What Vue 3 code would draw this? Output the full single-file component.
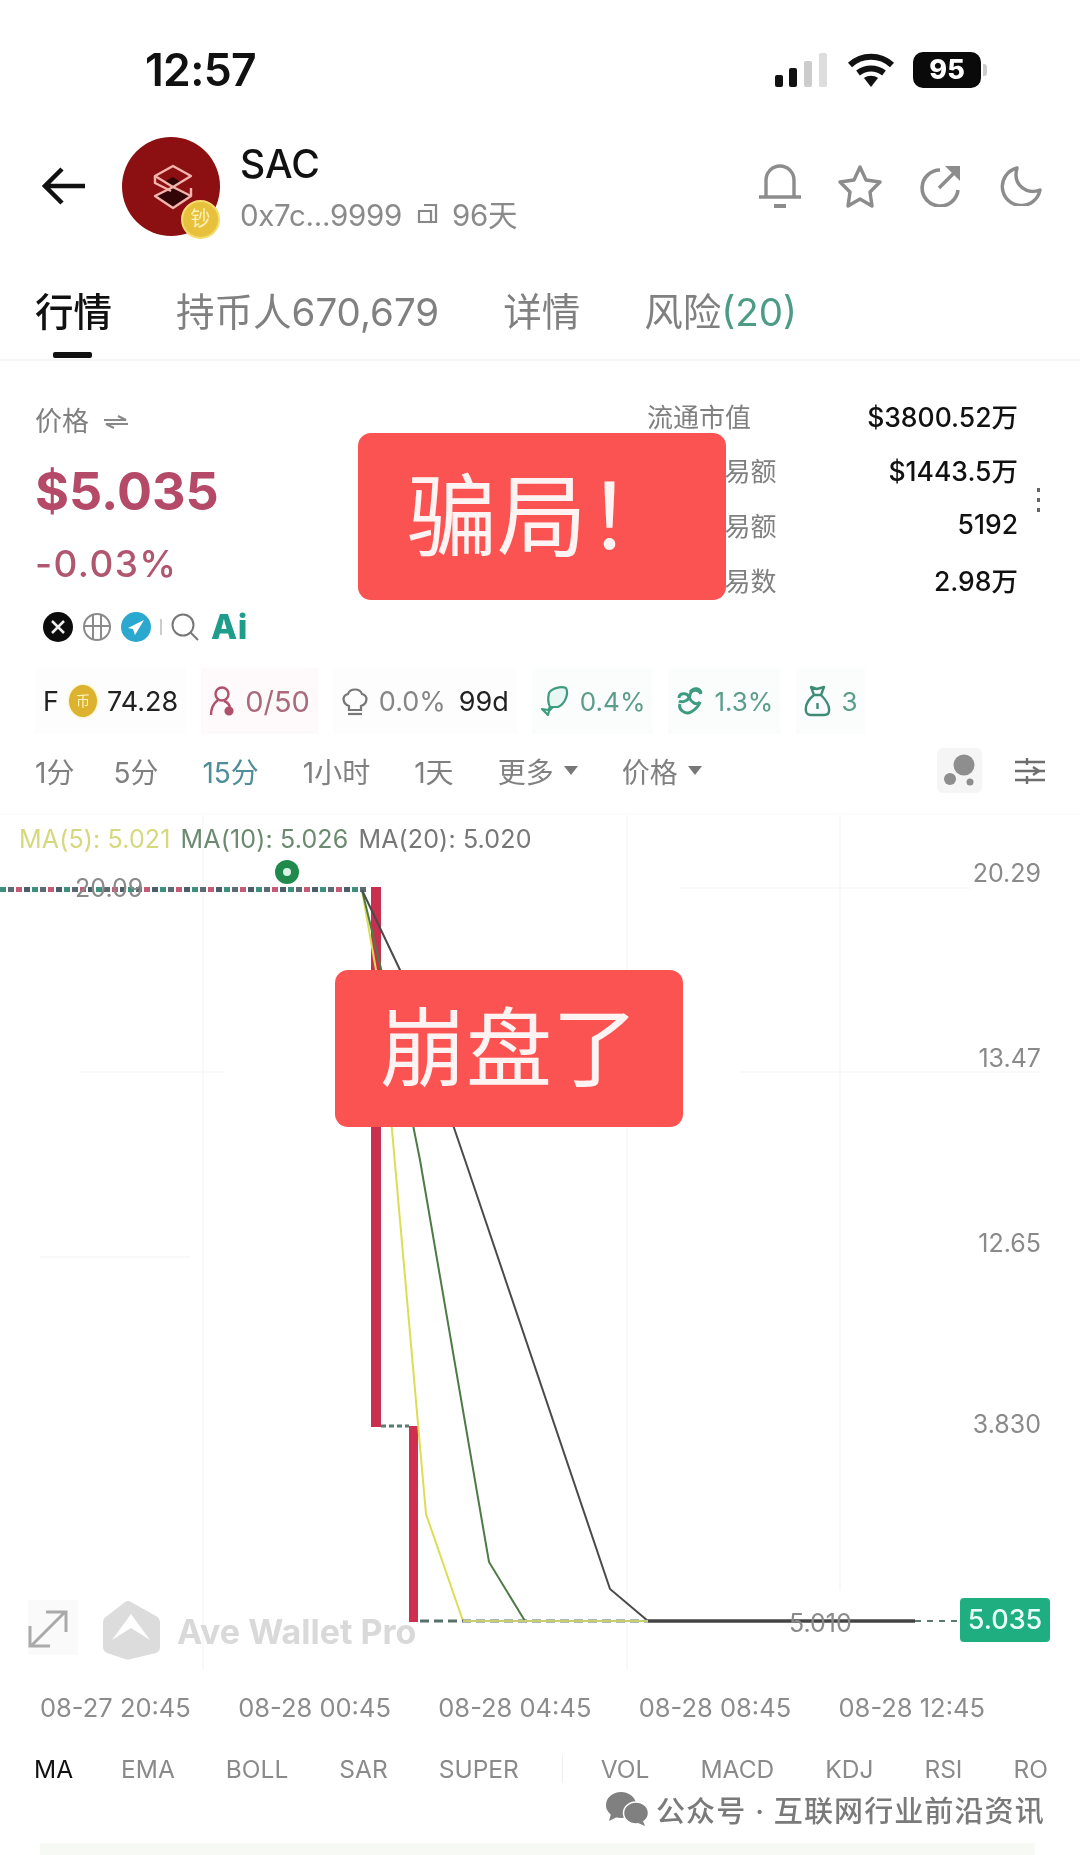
<script setup>
const tabs = [
  { label: '行情', active: true },
  { label: '持币人670,679' },
  { label: '详情' },
]

const stats = [
  { label: '流通市值', value: '$3800.52万' },
  { label: '24H交易额', value: '$1443.5万' },
  { label: '24H交易额', value: '5192' },
  { label: '24H交易数', value: '2.98万' },
]

const frames = ['1分', '5分', '15分', '1小时', '1天']
const indicators = ['MA', 'EMA', 'BOLL', 'SAR', 'SUPER']
const subIndicators = ['VOL', 'MACD', 'KDJ', 'RSI', 'RO']
const times = ['08-27 20:45', '08-28 00:45', '08-28 04:45', '08-28 08:45', '08-28 12:45']

const axis = [
  { text: '20.29', y: 882 },
  { text: '13.47', y: 1067 },
  { text: '12.65', y: 1252 },
  { text: '3.830', y: 1433 },
]

// small flat candles before the drop
const colors = ['#3f8f7d', '#5d6a73', '#c25a78', '#4b5f68']
const candles = []
for (let x = 0, i = 0; x < 362; x += 8, i++) {
  candles.push({ x, color: colors[i % 4] })
}
</script>

<template>
  <div class="page">
    <div class="status">
      <span class="time">12:57</span>
      <div class="status-icons">
        <svg width="54" height="34" viewBox="0 0 54 34">
          <rect x="0" y="22" width="8" height="12" rx="2" fill="#111" />
          <rect x="14" y="15" width="8" height="19" rx="2" fill="#111" />
          <rect x="29" y="8" width="8" height="26" rx="2" fill="#ccc" />
          <rect x="44" y="0" width="8" height="34" rx="2" fill="#ddd" />
        </svg>
        <svg width="48" height="34" viewBox="0 0 48 34">
          <path d="M3 12C15 1 33 1 45 12" fill="none" stroke="#111" stroke-width="6" />
          <path d="M11 20c8-6 18-6 26 0" fill="none" stroke="#111" stroke-width="6" />
          <path d="M17 25c4-3 10-3 14 0l-7 9z" fill="#111" />
        </svg>
        <div class="battery">95</div>
        <div class="battery-tip"></div>
      </div>
    </div>

    <div class="header">
      <svg class="back" width="44" height="38" viewBox="0 0 44 38">
        <path d="M43 19H3M20 2L3 19l17 17" fill="none" stroke="#111" stroke-width="4.5" />
      </svg>
      <div class="avatar">
        <svg class="avatar-logo" width="42" height="46" viewBox="0 0 42 46">
          <path d="M21 22l18 10-18 12L3 32z" fill="#320606" />
          <path d="M12 18l9-5 9 6-9 5z" fill="#320606" />
          <g fill="none" stroke="#f2b4ad" stroke-width="2.4" stroke-linejoin="round">
            <path d="M21 2l18 10-18 11L3 12z" />
            <path d="M21 23l18 9-18 12L3 32z" />
            <path d="M3 12v7l16 8M39 24v8" />
          </g>
        </svg>
        <div class="avatar-badge">钞</div>
      </div>
      <div class="token">
        <div class="token-name">SAC</div>
        <div class="token-sub">
          <span>0x7c...9999</span>
          <svg width="22" height="24" viewBox="0 0 22 24" fill="none" stroke="#888" stroke-width="2.2">
            <path d="M8 2h12v17H3V8h12v11" />
          </svg>
          <span>96天</span>
        </div>
      </div>
      <div class="actions">
        <svg width="42" height="46" viewBox="0 0 42 46" fill="none" stroke="#8c8c8c" stroke-width="3.4">
          <path d="M7 33V17a14 14 0 0 1 28 0v16" />
          <path d="M0 34h42" />
          <path d="M15 43h12" stroke-width="4" />
        </svg>
        <svg width="44" height="44" viewBox="0 0 44 44" fill="none" stroke="#8c8c8c" stroke-width="3.4" stroke-linejoin="round">
          <path d="M22 3l6 13 14 2-10 10 2 14-12-7-12 7 2-14L2 18l14-2z" />
        </svg>
        <svg width="44" height="42" viewBox="0 0 44 42" fill="none" stroke="#8c8c8c" stroke-width="3.6">
          <path d="M21 5A18 18 0 1 0 39 25" />
          <path d="M20 23L36 7" />
          <path d="M26 1h15v15z" fill="#8c8c8c" stroke="none" />
        </svg>
        <svg width="42" height="40" viewBox="0 0 42 40" fill="none" stroke="#8c8c8c" stroke-width="3.4" stroke-linejoin="round">
          <path d="M17 2A19 19 0 1 0 40 24C28 29 12 20 17 2z" />
        </svg>
      </div>
    </div>

    <div class="tabs">
      <div v-for="t in tabs" :key="t.label" class="tab" :class="{ active: t.active }">{{ t.label }}</div>
      <div class="tab">风险<span class="risk">(20)</span></div>
    </div>

    <div class="price-section">
      <div class="price-left">
        <div class="price-label">
          价格
          <svg width="26" height="14" viewBox="0 0 26 14" fill="none" stroke="#888" stroke-width="2">
            <path d="M1 5h22L15 1M25 9H3l8 4" />
          </svg>
        </div>
        <div class="price">$5.035</div>
        <div class="change">-0.03%</div>
        <div class="socials">
          <div class="x-icon">
            <svg width="16" height="16" viewBox="0 0 16 16" stroke="#eee" stroke-width="2.5"><path d="M2 2l12 12M14 2L2 14" /></svg>
          </div>
          <svg width="30" height="30" viewBox="0 0 30 30" fill="none" stroke="#8a8a8a" stroke-width="2">
            <circle cx="15" cy="15" r="13" />
            <path d="M2 14h26M11 2.5v25M19 2.5v25" />
          </svg>
          <div class="tg-icon">
            <svg width="18" height="18" viewBox="0 0 18 18" fill="#fff"><path d="M17 2L1 10l5 1 2 6 3-5z" /></svg>
          </div>
          <div class="divider"></div>
          <svg width="28" height="28" viewBox="0 0 28 28" fill="none" stroke="#777" stroke-width="2">
            <circle cx="12" cy="12" r="10.5" />
            <path d="M19 19l8 8" />
          </svg>
          <span class="ai">Ai</span>
        </div>
      </div>
      <div class="stats">
        <div v-for="(s, i) in stats" :key="i" class="stat">
          <span class="stat-label">{{ s.label }}</span>
          <span class="stat-value">{{ s.value }}</span>
        </div>
      </div>
      <div class="more-dots"><i></i><i></i><i></i></div>
      <div class="sticker sticker-scam">骗局！</div>
    </div>

    <div class="chips">
      <div class="chip">
        <span class="dark">F</span>
        <div class="coin">币</div>
        <span class="dark">74.28</span>
      </div>
      <div class="chip chip-red">
        <svg width="26" height="30" viewBox="0 0 26 30" fill="none" stroke="#b0506a" stroke-width="2.4">
          <circle cx="13" cy="8" r="6.5" />
          <path d="M9 14c-4 3-7 8-7 15M15 15c3 1 5 3 6 6" />
          <circle cx="20" cy="25" r="3.4" fill="#b0506a" />
        </svg>
        <span class="red">0/50</span>
      </div>
      <div class="chip">
        <svg width="28" height="30" viewBox="0 0 28 30" fill="none" stroke="#777" stroke-width="2.2">
          <path d="M8 20C2 18 0 10 7 8c2-6 12-6 14 0 7 2 5 10-1 12v4H8z" />
          <path d="M7 28h14" />
        </svg>
        <span class="gray">0.0%</span>
        <span class="dark days">99d</span>
      </div>
      <div class="chip chip-green">
        <svg width="30" height="32" viewBox="0 0 30 32" fill="none" stroke="#3d9b80" stroke-width="2.2" stroke-linejoin="round">
          <path d="M9 8c3-5 12-7 17-5 3 6-1 16-8 19H10c-2-4-2-10-1-14z" fill="#e7f7f1" />
          <path d="M10 22l-2 3-6-1 6 6 1-4 4-4" />
        </svg>
        <span class="green">0.4%</span>
      </div>
      <div class="chip chip-green">
        <svg width="28" height="30" viewBox="0 0 28 30" fill="none" stroke="#3d9b80" stroke-width="3">
          <path d="M3 12c0-5 8-6 10-1s7 9 11 5" />
          <path d="M25 8c-2-5-10-5-11 1s-8 8-11 6" />
          <path d="M4 18c-2 6 6 11 11 8s8-6 9-10" />
          <path d="M14 6c4-5 10-4 11 1" />
        </svg>
        <span class="green">1.3%</span>
      </div>
      <div class="chip chip-green">
        <svg width="27" height="32" viewBox="0 0 27 32" fill="none" stroke="#3f8c76" stroke-width="2.4" stroke-linejoin="round">
          <path d="M7 2l6 2 7-2-3 8h-7zM10 10C5 14 1 20 2 26c0 3 3 4 5 4h13c3 0 5-1 5-4 1-6-4-12-8-16" />
          <path d="M13.500 18v6" />
        </svg>
        <span class="green">3</span>
      </div>
    </div>

    <div class="frames">
      <span v-for="f in frames" :key="f" :class="{ current: f === '15分' }">{{ f }}</span>
      <span class="dropdown">更多<i class="caret"></i></span>
      <span class="dropdown">价格<i class="caret"></i></span>
      <div class="frames-right">
        <div class="shape-btn">
          <svg width="32" height="34" viewBox="0 0 32 34" fill="#8e8e8e">
            <circle cx="20" cy="11" r="10.500" />
            <circle cx="6" cy="25" r="6" />
            <circle cx="26" cy="28" r="3.500" />
          </svg>
        </div>
        <svg width="30" height="30" viewBox="0 0 30 30" fill="none" stroke="#6e6e6e" stroke-width="2.4">
          <path d="M0 6h30M0 15h30M0 24h30" />
          <path d="M12 2v7M18 11l6 4-6 4M12 20v8" />
        </svg>
      </div>
    </div>

    <div class="chart">
      <svg class="chart-canvas" width="1080" height="855" viewBox="0 815 1080 855">
        <g stroke="#f8f8f8" stroke-width="1.5">
          <path d="M203 815V1670M627 815V1670M840 815V1590" />
          <path d="M80 1072H225M740 1072H1040M680 888H970M40 1257H190" />
        </g>
        <circle cx="287" cy="872" r="12" fill="#1f8a4c" />
        <circle cx="287" cy="872" r="4" fill="#d9f2e2" />
        <rect v-for="c in candles" :key="c.x" :x="c.x" y="887" width="6" height="5" :fill="c.color" />
        <text x="75" y="897" class="chart-label">20.09</text>
        <rect x="371" y="887" width="10" height="540" fill="#c9304f" />
        <path d="M381 1426H409" stroke="#5b7a70" stroke-width="3" stroke-dasharray="5 3" />
        <rect x="409" y="1426" width="9" height="196" fill="#d0304f" />
        <path d="M362 890L376 970L392 1130L426 1514L463 1621" fill="none" stroke="#dddd55" stroke-width="2" />
        <path d="M362 890L385 985L420 1160L489 1562L525 1621" fill="none" stroke="#4e7a45" stroke-width="2" />
        <path d="M362 890L400 970L465 1160L610 1589L648 1621" fill="none" stroke="#4a4a4a" stroke-width="2" />
        <path d="M420 1621H648" stroke="#58706a" stroke-width="3" stroke-dasharray="9 5" />
        <path d="M463 1621H648" stroke="#c8cf70" stroke-width="2" />
        <path d="M648 1621H915" stroke="#444" stroke-width="3.500" />
        <path d="M915 1621H958" stroke="#5b7a70" stroke-width="2" stroke-dasharray="6 6" />
        <text x="789" y="1632" class="chart-label">5.010</text>
        <text v-for="a in axis" :key="a.text" x="1041" :y="a.y" text-anchor="end" class="axis-label">{{ a.text }}</text>
        <rect x="28" y="1600" width="50" height="55" fill="#fafafa" />
        <path d="M30 1626v20h20M66 1632v-20H46M31 1646l34-34" fill="none" stroke="#aaa" stroke-width="3" />
        <path d="M131 1602l25 14q4 2 4 7v24q0 4-4 6l-25 6q-3 1-6 0l-18-6q-4-2-4-6v-24q0-5 4-7l18-14q3-2 6 0z" fill="#dcdcdc" />
        <path d="M112 1640l19-26 19 26-19-12z" fill="#fff" />
        <text x="177" y="1644" class="watermark-logo">Ave Wallet Pro</text>
      </svg>
      <div class="ma-line">
        <span class="ma5">MA(5): 5.021</span>
        <span class="ma10">MA(10): 5.026</span>
        <span class="ma20">MA(20): 5.020</span>
      </div>
      <div class="price-tag">5.035</div>
      <div class="sticker sticker-crash">崩盘了</div>
    </div>

    <div class="times">
      <span v-for="t in times" :key="t">{{ t }}</span>
    </div>

    <div class="indicators">
      <span v-for="(n, i) in indicators" :key="n" :class="{ selected: i === 0 }">{{ n }}</span>
      <div class="indicator-sep"></div>
      <span v-for="n in subIndicators" :key="n">{{ n }}</span>
    </div>

    <div class="account">
      <svg width="44" height="34" viewBox="0 0 44 34" fill="#808080">
        <ellipse cx="16" cy="13" rx="15" ry="13" />
        <path d="M6 22l-2 7 8-4z" />
        <ellipse cx="31" cy="21" rx="12.5" ry="11" stroke="#fff" stroke-width="1.5" />
        <path d="M38 29l2 5-7-3z" />
      </svg>
      <span>公众号 · 互联网行业前沿资讯</span>
    </div>
    <div class="bottom-strip"></div>
  </div>
</template>

<style scoped>
.page {
  position: relative;
  width: 1080px;
  height: 1855px;
  overflow: hidden;
  background: #fff;
  color: #111;
  font-family: Inter, "Noto Sans CJK SC", sans-serif;
  filter: blur(0.7px);
}

.status {
  height: 120px;
  display: flex;
  align-items: center;
  justify-content: space-between;
  padding: 20px 94px 0 145px;
  box-sizing: border-box;
}

.time {
  font-size: 44.5px;
  font-weight: 600;
  letter-spacing: -0.7px;
}

.status-icons {
  display: flex;
  align-items: center;
  gap: 18px;
  margin-right: -1px;
}

.battery {
  width: 68px;
  height: 36px;
  border-radius: 10px;
  background: #0a0a0a;
  color: #fff;
  font-size: 27px;
  font-weight: 800;
  line-height: 36px;
  text-align: center;
}

.battery-tip {
  width: 4px;
  height: 12px;
  margin-left: -16px;
  border-radius: 0 3px 3px 0;
  background: #ccc;
}

.header {
  height: 132px;
  display: flex;
  align-items: center;
  padding-left: 42px;
}

.back {
  margin-right: 36px;
}

.avatar {
  position: relative;
  width: 98px;
  height: 99px;
  border-radius: 50%;
  background: #8c0f12;
  margin-right: 20px;
}

.avatar-logo {
  position: absolute;
  left: 30px;
  top: 27px;
}

.avatar-badge {
  position: absolute;
  left: 59px;
  top: 63px;
  width: 39px;
  height: 39px;
  border-radius: 50%;
  background: #e8c13c;
  border: 2px solid #f5dc70;
  box-sizing: border-box;
  color: #fdf1b8;
  font-size: 20px;
  line-height: 34px;
  text-align: center;
}

.token-name {
  font-size: 39px;
  font-weight: 500;
  line-height: 46px;
}

.token-sub {
  margin-top: 11px;
  display: flex;
  align-items: center;
  gap: 14px;
  color: #8a8a8a;
  font-size: 29.5px;
  line-height: 34px;
  letter-spacing: -0.3px;
}

.actions {
  margin-left: auto;
  padding-right: 38px;
  display: flex;
  align-items: center;
  gap: 37px;
}

.tabs {
  height: 109px;
  display: flex;
  gap: 64px;
  padding: 38px 0 0 35px;
  box-sizing: border-box;
  border-bottom: 2px solid #f6f6f6;
}

.tab {
  position: relative;
  font-size: 38.5px;
  line-height: 44px;
  color: #808080;
  white-space: nowrap;
}

.tab.active {
  color: #111;
  font-weight: 500;
}

.tab.active::after {
  content: "";
  position: absolute;
  left: 18px;
  top: 62px;
  width: 39px;
  height: 6px;
  border-radius: 2px;
  background: #111;
}

.risk {
  color: #4c9c85;
}

.price-section {
  position: relative;
  height: 302px;
  display: flex;
  justify-content: space-between;
  padding: 0 62px 0 35px;
}

.price-label {
  margin-top: 44px;
  display: flex;
  align-items: center;
  gap: 14px;
  font-size: 27px;
  line-height: 34px;
  color: #808080;
}

.price {
  margin-top: 22px;
  font-size: 52px;
  font-weight: 700;
  line-height: 62px;
  color: #b54a68;
}

.change {
  margin-top: 19px;
  font-size: 37px;
  font-weight: 500;
  line-height: 44px;
  letter-spacing: 1.4px;
  color: #b0566f;
}

.socials {
  margin-top: 23px;
  margin-left: 8px;
  display: flex;
  align-items: center;
  gap: 9px;
}

.x-icon,
.tg-icon {
  width: 30px;
  height: 30px;
  border-radius: 50%;
  display: flex;
  align-items: center;
  justify-content: center;
  background: #0c0c0c;
}

.tg-icon {
  background: #2ba8cf;
}

.divider {
  width: 2px;
  height: 16px;
  background: #ccc;
}

.ai {
  margin-left: 3px;
  font-size: 34px;
  font-weight: 800;
  line-height: 36px;
  letter-spacing: 0.5px;
  color: #1f9d8c;
}

.stats {
  width: 371px;
  padding-top: 27px;
}

.stat {
  height: 54.6px;
  display: flex;
  justify-content: space-between;
  align-items: center;
}

.stat-label {
  font-size: 26px;
  color: #808080;
}

.stat-value {
  font-size: 26.5px;
  font-weight: 500;
  color: #111;
}

.more-dots {
  position: absolute;
  left: 1037px;
  top: 127px;
  display: flex;
  flex-direction: column;
  gap: 6px;
}

.more-dots i {
  width: 3px;
  height: 4px;
  background: #666;
}

.sticker {
  position: absolute;
  display: flex;
  align-items: center;
  justify-content: center;
  border-radius: 13px;
  background: #fb5352;
  color: #fdf3f2;
  line-height: 1;
}

.sticker-scam {
  left: 358px;
  top: 72px;
  width: 368px;
  height: 167px;
  font-size: 90px;
}

.sticker-crash {
  left: 335px;
  top: 155px;
  width: 348px;
  height: 157px;
  font-size: 86px;
}

.chips {
  height: 74px;
  display: flex;
  align-items: center;
  gap: 15px;
  padding-left: 35px;
  margin-top: 1px;
}

.chip {
  height: 66px;
  display: flex;
  align-items: center;
  gap: 10px;
  padding: 0 8px;
  background: #fdfdfd;
  font-size: 27px;
  white-space: nowrap;
}

.chip-red {
  background: #fefafb;
}

.chip-green {
  background: #fafdfc;
}

.coin {
  width: 28px;
  height: 32px;
  border-radius: 50%;
  background: #dcb22e;
  box-shadow: 0 0 3px #f6e67a;
  color: #fff3c0;
  font-size: 14px;
  line-height: 32px;
  text-align: center;
}

.dark {
  color: #222;
}

.days {
  margin-left: 3px;
}

.red {
  color: #a96a7c;
  font-size: 29px;
}

.gray {
  color: #858585;
  font-size: 27px;
}

.green {
  color: #5b9d8a;
  font-size: 26px;
}

.frames {
  height: 77px;
  box-sizing: border-box;
  display: flex;
  align-items: center;
  gap: 44px;
  padding: 0 35px 10px;
  font-size: 28px;
  color: #808080;
  white-space: nowrap;
  border-bottom: 2px solid #fbfbfb;
}

.frames > span:first-child {
  margin-right: -5px;
}

.current {
  color: #4f8d99;
}

.dropdown {
  display: flex;
  align-items: center;
  gap: 10px;
}

.caret {
  width: 0;
  height: 0;
  border-left: 7px solid transparent;
  border-right: 7px solid transparent;
  border-top: 9px solid #777;
}

.frames-right {
  margin-left: auto;
  display: flex;
  align-items: center;
  gap: 33px;
}

.shape-btn {
  width: 45px;
  height: 45px;
  border-radius: 6px;
  background: #f5f5f5;
  display: flex;
  align-items: center;
  justify-content: center;
}

.chart {
  position: relative;
  height: 855px;
}

.chart-canvas {
  position: absolute;
  left: 0;
  top: 0;
}

.chart-label {
  font-size: 25px;
  fill: #8a8a8a;
}

.axis-label {
  font-size: 25px;
  fill: #8a8a8a;
}

.watermark-logo {
  font-size: 34px;
  font-weight: 700;
  fill: #d9d9d9;
}

.ma-line {
  position: absolute;
  left: 19px;
  top: 9px;
  display: flex;
  gap: 10px;
  font-size: 25px;
  line-height: 30px;
  letter-spacing: 0.15px;
  white-space: nowrap;
}

.ma5 {
  color: #d6d87e;
}

.ma10 {
  color: #6b8a70;
}

.ma20 {
  color: #777;
}

.price-tag {
  position: absolute;
  left: 960px;
  top: 783px;
  width: 90px;
  height: 44px;
  border-radius: 4px;
  background: #1fae7f;
  color: #e8fff6;
  font-size: 27px;
  font-weight: 500;
  line-height: 44px;
  text-align: center;
}

.times {
  height: 74px;
  display: flex;
  align-items: center;
  justify-content: space-between;
  padding: 0 95px 0 40px;
  font-size: 25.5px;
  color: #8c8c8c;
  white-space: nowrap;
}

.indicators {
  height: 50px;
  display: flex;
  align-items: center;
  gap: 51px;
  padding-left: 34px;
  font-size: 24.5px;
  color: #8a8a8a;
  white-space: nowrap;
}

.indicators > span:first-child {
  margin-right: -3px;
}

.selected {
  color: #111;
}

.indicator-sep {
  width: 1px;
  height: 28px;
  background: #eee;
  margin: 0 -13px 0 -8px;
}

.account {
  position: absolute;
  left: 605px;
  top: 1788px;
  display: flex;
  align-items: center;
  gap: 7px;
  font-size: 29px;
  font-weight: 500;
  letter-spacing: 1.1px;
  color: #7a7a7a;
  white-space: nowrap;
}

.bottom-strip {
  position: absolute;
  left: 40px;
  right: 45px;
  top: 1843px;
  height: 12px;
  background: #f7f9f5;
}
</style>
